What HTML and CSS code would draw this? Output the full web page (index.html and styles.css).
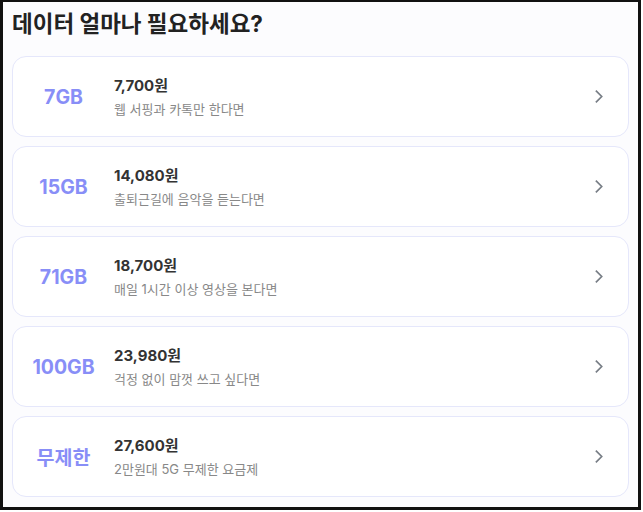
FILE: index.html
```html
<!DOCTYPE html>
<html lang="ko">
<head>
    <meta charset="UTF-8">
    <meta name="viewport" content="width=device-width, initial-scale=1.0">
    <title>데이터 요금제</title>
    <link rel="stylesheet" href="styles.css">
</head>
<body>
    <div id="frame">
        <h1 class="title">데이터 얼마나 필요하세요?</h1>
        <div class="plans">
            <div class="plan">
                <div class="amount">7GB</div>
                <div class="info">
                    <p class="price">7,700원</p>
                    <p class="desc">웹 서핑과 카톡만 한다면</p>
                </div>
                <svg class="arrow" viewBox="0 0 16 16"><path d="M5.5 2.5l5.5 5.5-5.5 5.5"/></svg>
            </div>
            <div class="plan">
                <div class="amount">15GB</div>
                <div class="info">
                    <p class="price">14,080원</p>
                    <p class="desc">출퇴근길에 음악을 듣는다면</p>
                </div>
                <svg class="arrow" viewBox="0 0 16 16"><path d="M5.5 2.5l5.5 5.5-5.5 5.5"/></svg>
            </div>
            <div class="plan">
                <div class="amount">71GB</div>
                <div class="info">
                    <p class="price">18,700원</p>
                    <p class="desc">매일 1시간 이상 영상을 본다면</p>
                </div>
                <svg class="arrow" viewBox="0 0 16 16"><path d="M5.5 2.5l5.5 5.5-5.5 5.5"/></svg>
            </div>
            <div class="plan">
                <div class="amount">100GB</div>
                <div class="info">
                    <p class="price">23,980원</p>
                    <p class="desc">걱정 없이 맘껏 쓰고 싶다면</p>
                </div>
                <svg class="arrow" viewBox="0 0 16 16"><path d="M5.5 2.5l5.5 5.5-5.5 5.5"/></svg>
            </div>
            <div class="plan">
                <div class="amount">무제한</div>
                <div class="info">
                    <p class="price">27,600원</p>
                    <p class="desc">2만원대 5G 무제한 요금제</p>
                </div>
                <svg class="arrow" viewBox="0 0 16 16"><path d="M5.5 2.5l5.5 5.5-5.5 5.5"/></svg>
            </div>
        </div>
    </div>
</body>
</html>
```

FILE: styles.css
```css
*{
    margin: 0;
    padding: 0;
    box-sizing: border-box;
}
body{
    background: #ffffff;
    font-family: Inter, "Noto Sans CJK KR", sans-serif;
}
#frame{
    width: 641px;
    height: 510px;
    border: 3px solid #111111;
    border-top-width: 2px;
    background: #fcfcfe;
    padding: 6px 9px 0 9px;
}
.title{
    font-size: 22.5px;
    font-weight: 700;
    color: #222222;
    line-height: 32px;
}
.plans{
    margin-top: 16px;
    display: flex;
    flex-direction: column;
    gap: 9px;
}
.plan{
    height: 81px;
    display: flex;
    align-items: center;
    background: #ffffff;
    border: 1px solid #e5e7fb;
    border-radius: 14px;
}
.amount{
    width: 101px;
    text-align: center;
    font-size: 19.5px;
    font-weight: 700;
    color: #888ef7;
}
.info{
    flex: 1;
    display: flex;
    flex-direction: column;
    gap: 4px;
}
.price{
    font-size: 15px;
    font-weight: 700;
    color: #333333;
    line-height: 20px;
}
.desc{
    font-size: 13px;
    color: #888888;
    line-height: 18px;
}
.arrow{
    width: 17px;
    height: 17px;
    margin-right: 21px;
    fill: none;
    stroke: #777d85;
    stroke-width: 1.6;
}
```
